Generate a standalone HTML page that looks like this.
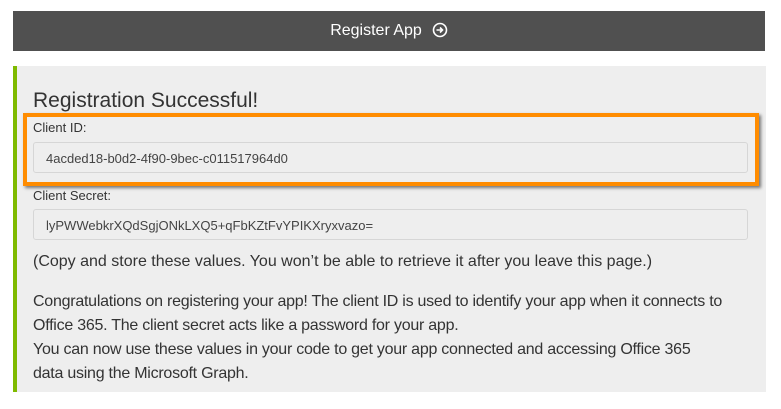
<!DOCTYPE html>
<html><head><meta charset="utf-8"><style>
body{margin:0;width:781px;height:409px;background:#fff;font-family:"Liberation Sans",sans-serif;position:relative;overflow:hidden}
.bar{position:absolute;left:13px;top:11px;width:752px;height:40px;background:#505050;color:#fff;font-size:16px;text-align:center;line-height:40px}
.bar svg{vertical-align:-3px;margin-left:10px}
.panel{position:absolute;left:13px;top:66px;width:753px;height:326px;background:#eeeeee;border-left:4px solid #7fba00;box-sizing:border-box}
h1{position:absolute;left:33px;top:89px;margin:0;font-weight:normal;font-size:21px;color:#333}
.orange{position:absolute;left:23px;top:113px;width:728px;height:65px;border:4px solid #ff8c00;box-shadow:2px 2px 3px rgba(0,0,0,.5)}
.lbl{position:absolute;left:33px;font-size:13px;color:#333}
.inp{position:absolute;left:33px;width:715px;height:31px;border:1px solid #d6d6d6;border-radius:3px;background:#eeeeee;font-size:13px;line-height:31px;padding-left:12px;box-sizing:border-box;color:#444}
.p{position:absolute;left:33px;font-size:16px;color:#333;line-height:24px;white-space:nowrap}
</style></head><body>
<div class="bar">Register App<svg width="16" height="16" viewBox="0 0 16 16"><circle cx="8" cy="8" r="6.5" fill="none" stroke="#fff" stroke-width="1.6"/><path d="M4.5 8h6M8 5.5L10.5 8 8 10.5" fill="none" stroke="#fff" stroke-width="1.6"/></svg></div>
<div class="panel"></div>
<h1>Registration Successful!</h1>
<div class="orange"></div>
<div class="lbl" style="top:120px">Client ID:</div>
<div class="inp" style="top:142px">4acded18-b0d2-4f90-9bec-c011517964d0</div>
<div class="lbl" style="top:188px">Client Secret:</div>
<div class="inp" style="top:209px">lyPWWebkrXQdSgjONkLXQ5+qFbKZtFvYPIKXryxvazo=</div>
<div class="p" style="top:250px">(Copy and store these values. You won’t be able to retrieve it after you leave this page.)</div>
<div class="p" style="top:290px;letter-spacing:-0.25px">Congratulations on registering your app! The client ID is used to identify your app when it connects to<br>Office 365. The client secret acts like a password for your app.<br>You can now use these values in your code to get your app connected and accessing Office 365<br>data using the Microsoft Graph.</div>
</body></html>
